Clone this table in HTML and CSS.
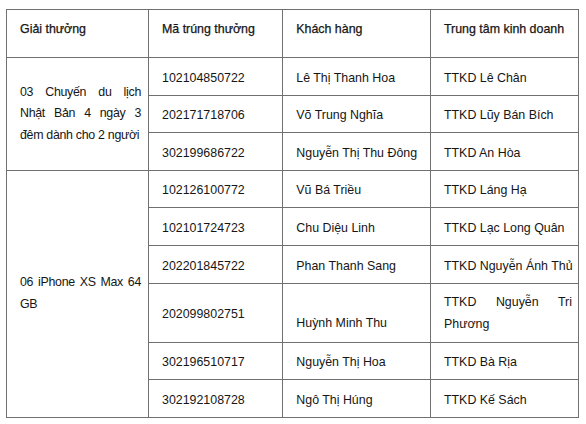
FILE: index.html
```html
<!DOCTYPE html>
<html lang="vi">
<head>
<meta charset="utf-8">
<link rel="stylesheet" href="styles.css">
</head>
<body>
<table class="prize-table">
  <colgroup>
    <col class="c1"><col class="c2"><col class="c3"><col class="c4">
  </colgroup>
  <thead>
    <tr class="head-row">
      <th>Giải thưởng</th>
      <th>Mã trúng thưởng</th>
      <th>Khách hàng</th>
      <th>Trung tâm kinh doanh</th>
    </tr>
  </thead>
  <tbody>
    <tr class="row">
      <td rowspan="3" class="prize">03 Chuyến du lịch Nhật Bản 4 ngày 3 đêm dành cho 2 người</td>
      <td>102104850722</td>
      <td>Lê Thị Thanh Hoa</td>
      <td class="center">TTKD Lê Chân</td>
    </tr>
    <tr class="row">
      <td>202171718706</td>
      <td>Võ Trung Nghĩa</td>
      <td class="center">TTKD Lũy Bán Bích</td>
    </tr>
    <tr class="row">
      <td>302199686722</td>
      <td>Nguyễn Thị Thu Đông</td>
      <td class="center">TTKD An Hòa</td>
    </tr>
    <tr class="row">
      <td rowspan="6" class="prize">06 iPhone XS Max 64 GB</td>
      <td>102126100772</td>
      <td>Vũ Bá Triều</td>
      <td class="center">TTKD Láng Hạ</td>
    </tr>
    <tr class="row">
      <td>102101724723</td>
      <td>Chu Diệu Linh</td>
      <td class="center">TTKD Lạc Long Quân</td>
    </tr>
    <tr class="row">
      <td>202201845722</td>
      <td>Phan Thanh Sang</td>
      <td class="center">TTKD Nguyễn Ánh Thủ</td>
    </tr>
    <tr class="row tall">
      <td>202099802751</td>
      <td class="bottom">Huỳnh Minh Thu</td>
      <td class="center justify">TTKD Nguyễn Tri Phương</td>
    </tr>
    <tr class="row">
      <td>302196510717</td>
      <td>Nguyễn Thị Hoa</td>
      <td class="center">TTKD Bà Rịa</td>
    </tr>
    <tr class="row">
      <td>302192108728</td>
      <td>Ngô Thị Húng</td>
      <td class="center">TTKD Kế Sách</td>
    </tr>
  </tbody>
</table>
</body>
</html>
```

FILE: styles.css
```css
html, body {
  margin: 0;
  padding: 0;
  background: #ffffff;
}

body {
  padding: 9px 0 0 6px;
  font-family: "Liberation Sans", Arial, sans-serif;
  font-size: 12.4px;
  color: #161616;
}

.prize-table {
  border-collapse: collapse;
  table-layout: fixed;
  width: 572px;
  border: 1px solid #9c9c9c;
}

.c1 { width: 142px; }
.c2 { width: 134.3px; }
.c3 { width: 147.7px; }
.c4 { width: 148px; }

.prize-table th,
.prize-table td {
  border: 1px solid #707070;
  text-align: left;
  font-weight: normal;
  line-height: 21.5px;
  padding: 4px 4px 0 13px;
  vertical-align: middle;
}

.prize-table th {
  -webkit-text-stroke: 0.25px #161616;
  padding: 0 4px 8px 13px;
}

.head-row { height: 48px; }
.row { height: 37.6px; }
.row.tall { height: 59.3px; }

.prize-table td.prize {
  text-align: justify;
  letter-spacing: -0.3px;
  padding: 0 7px 0 13px;
}

.prize-table td.justify {
  text-align: justify;
  padding: 2px 6px 0 13px;
}

.prize-table td.bottom {
  vertical-align: bottom;
  padding-bottom: 7px;
}
```
